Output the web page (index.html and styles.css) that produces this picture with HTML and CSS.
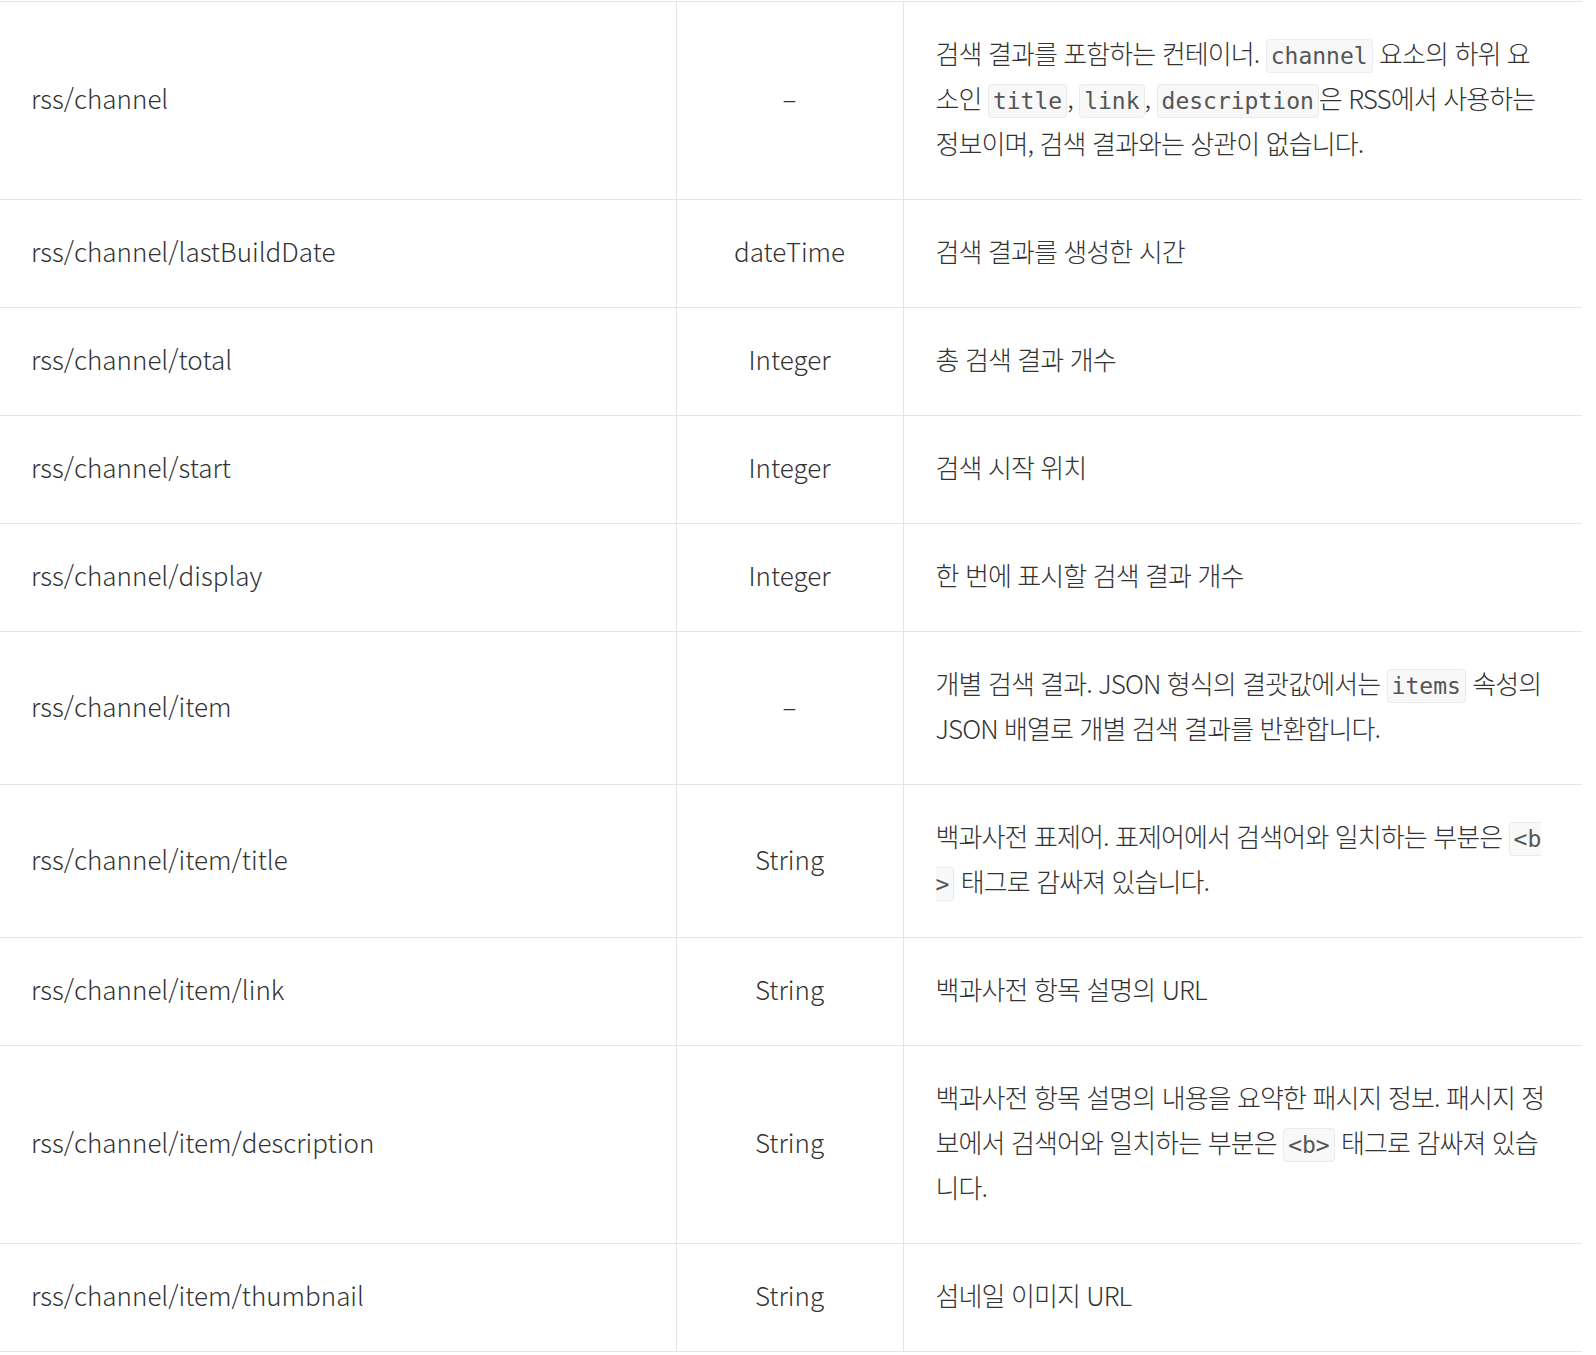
FILE: index.html
```html
<!DOCTYPE html>
<html lang="ko">
<head>
    <meta charset="utf-8">
    <title>응답 요소</title>
    <link rel="stylesheet" href="styles.css">
</head>
<body>
    <table class="spec-table">
        <colgroup>
            <col class="col-name">
            <col class="col-type">
            <col class="col-desc">
        </colgroup>
        <tbody>
            <tr>
                <td class="name">rss/channel</td>
                <td class="type">–</td>
                <td class="desc">검색 결과를 포함하는 컨테이너. <code>channel</code> 요소의 하위 요소인 <code>title</code>, <code>link</code>, <code>description</code>은 RSS에서 사용하는 정보이며, 검색 결과와는 상관이 없습니다.</td>
            </tr>
            <tr>
                <td class="name">rss/channel/lastBuildDate</td>
                <td class="type">dateTime</td>
                <td class="desc">검색 결과를 생성한 시간</td>
            </tr>
            <tr>
                <td class="name">rss/channel/total</td>
                <td class="type">Integer</td>
                <td class="desc">총 검색 결과 개수</td>
            </tr>
            <tr>
                <td class="name">rss/channel/start</td>
                <td class="type">Integer</td>
                <td class="desc">검색 시작 위치</td>
            </tr>
            <tr>
                <td class="name">rss/channel/display</td>
                <td class="type">Integer</td>
                <td class="desc">한 번에 표시할 검색 결과 개수</td>
            </tr>
            <tr>
                <td class="name">rss/channel/item</td>
                <td class="type">–</td>
                <td class="desc">개별 검색 결과. JSON 형식의 결괏값에서는 <code>items</code> 속성의 JSON 배열로 개별 검색 결과를 반환합니다.</td>
            </tr>
            <tr>
                <td class="name">rss/channel/item/title</td>
                <td class="type">String</td>
                <td class="desc">백과사전 표제어. 표제어에서 검색어와 일치하는 부분은 <code>&lt;b&gt;</code> 태그로 감싸져 있습니다.</td>
            </tr>
            <tr>
                <td class="name">rss/channel/item/link</td>
                <td class="type">String</td>
                <td class="desc">백과사전 항목 설명의 URL</td>
            </tr>
            <tr>
                <td class="name">rss/channel/item/description</td>
                <td class="type">String</td>
                <td class="desc">백과사전 항목 설명의 내용을 요약한 패시지 정보. 패시지 정보에서 검색어와 일치하는 부분은 <code>&lt;b&gt;</code> 태그로 감싸져 있습니다.</td>
            </tr>
            <tr>
                <td class="name">rss/channel/item/thumbnail</td>
                <td class="type">String</td>
                <td class="desc">섬네일 이미지 URL</td>
            </tr>
        </tbody>
    </table>
</body>
</html>
```

FILE: styles.css
```css
body {
    margin: 0;
    background-color: #fff;
    color: #333;
    font-family: "Noto Sans CJK KR", "Noto Sans", sans-serif;
}
.spec-table {
    width: 1582px;
    margin-top: 1px;
    border-collapse: collapse;
    table-layout: fixed;
    font-size: 26px;
    font-weight: 300;
    line-height: 45px;
}
.col-name {
    width: 676px;
}
.col-type {
    width: 227px;
}
.col-desc {
    width: 679px;
}
.spec-table td {
    padding: 28px 32px 34px;
    border-top: 1px solid #e5e5e5;
    border-bottom: 1px solid #e5e5e5;
    vertical-align: middle;
    word-break: break-all;
}
.spec-table td + td {
    border-left: 1px solid #e5e5e5;
}
.spec-table td.name {
    padding-left: 31px;
    letter-spacing: 0;
}
.spec-table td.type {
    text-align: center;
    letter-spacing: 0;
}
.spec-table td.desc {
    letter-spacing: -0.035em;
}
.spec-table code {
    font-family: "DejaVu Sans Mono", monospace;
    font-size: 23px;
    font-weight: 400;
    line-height: 1;
    letter-spacing: 0;
    color: #555;
    padding: 3px 4px;
    background-color: #f8f8f8;
    border: 1px solid #ebebeb;
    border-radius: 4px;
}
```
